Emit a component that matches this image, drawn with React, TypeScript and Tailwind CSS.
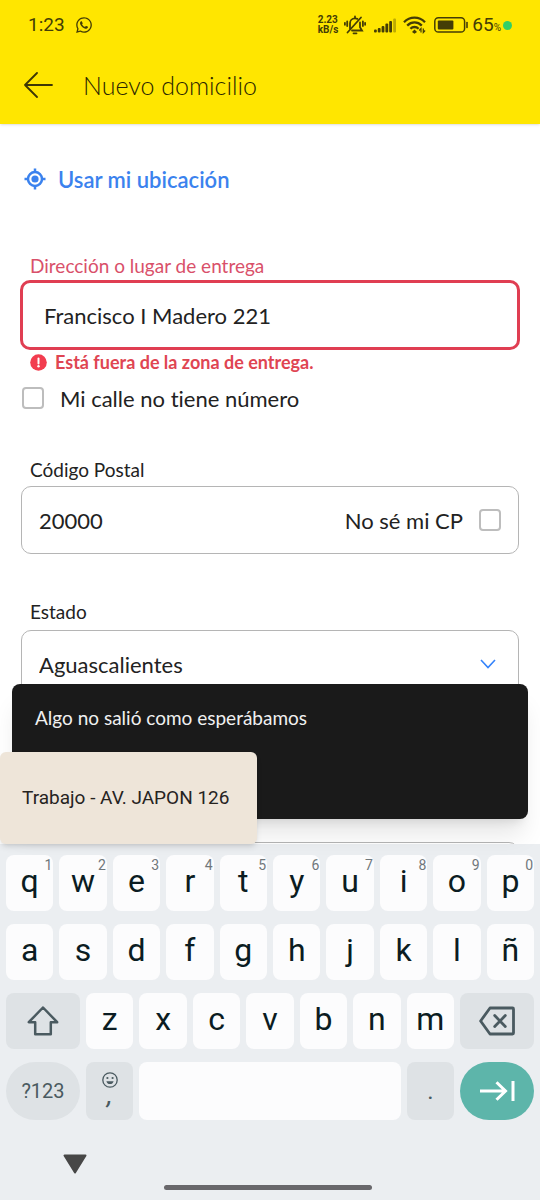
import React from 'react';
import { FaWhatsapp } from 'react-icons/fa';

const topRow = ['q', 'w', 'e', 'r', 't', 'y', 'u', 'i', 'o', 'p'];
const homeRow = ['a', 's', 'd', 'f', 'g', 'h', 'j', 'k', 'l', 'ñ'];
const bottomRow = ['z', 'x', 'c', 'v', 'b', 'n', 'm'];

const checkboxClass = 'w-[22px] h-[22px] shrink-0 appearance-none rounded border-2 border-[#bdbdbd] bg-white checked:bg-[#3483fa]';

function StatusBar() {
  return (
    <div className="h-[50px] flex items-center justify-between pl-7 pr-7 font-[Roboto,sans-serif] text-[#443d06]">
      <div className="flex items-center gap-2.5">
        <span className="text-[19px] leading-6">1:23</span>
        <FaWhatsapp className="w-[18px] h-[18px]" />
      </div>
      <div className="flex items-center">
        <div className="text-[10px] font-bold leading-[10px] mr-1.5">
          <div>2.23</div>
          <div>kB/s</div>
        </div>
        <svg className="w-[22px] h-5 mr-2" viewBox="0 0 22 20" fill="none" stroke="currentColor" strokeWidth="1.8" strokeLinecap="round">
          <path d="M6 13.5V8.500C6 5.500 8 3.400 11 3.400c.9 0 1.700.2 2.400.5M16 7.500v4.800l2 3.200H8" />
          <path d="M11 1.500v1.500M9.500 18.300h3M3.500 17.500 17 2.500" />
          <path d="M3.200 6.500v4.500M.9 7.800v2M18.900 6.500v4.500M21.100 7.800v2" />
        </svg>
        <svg className="w-[22px] h-4 mr-[7px]" viewBox="0 0 22 16" fill="currentColor">
          <rect x="0" y="12.5" width="2.8" height="3" rx="1" />
          <rect x="3.8" y="11" width="2.8" height="4.5" rx="1" />
          <rect x="7.6" y="9" width="2.8" height="6.5" rx="1" />
          <rect x="11.4" y="6.5" width="2.8" height="9" rx="1" />
          <rect x="15.2" y="4" width="2.8" height="11.5" rx="1" />
          <rect x="19.2" y="1.5" width="2.8" height="14" rx="1" opacity=".35" />
        </svg>
        <svg className="w-[23px] h-[18px] mr-2" viewBox="0 0 23 18" fill="none" stroke="currentColor" strokeWidth="2.3">
          <path d="M1 6.2C7 .2 16 .2 22 6.2" />
          <path d="M4.2 9.6c4.2-4.2 10.4-4.2 14.6 0" />
          <path d="M7.4 12.8c2.4-2.4 5.8-2.4 8.2 0" />
          <path d="M11.5 13.6 14 16l-2.5 1.8L9 16z" fill="currentColor" stroke="none" />
          <path d="M18 16.5v-4l-1.8 2M20.3 12.5v4l1.8-2" strokeWidth="1.2" />
        </svg>
        <svg className="w-[34px] h-4 mr-1" viewBox="0 0 34 16" fill="none" stroke="currentColor" strokeWidth="1.5">
          <rect x=".8" y=".8" width="29.8" height="14.2" rx="3.6" />
          <rect x="3.8" y="3.4" width="15.6" height="9" rx="1" fill="currentColor" stroke="none" />
          <path d="M33 5.5v5" strokeWidth="1.6" strokeLinecap="round" />
        </svg>
        <span className="text-[19px] leading-6">65</span>
        <span className="text-[10px] leading-3 pt-1.5">%</span>
        <span className="w-[9px] h-[9px] ml-0.5 rounded-full bg-[#33cf66]" />
      </div>
    </div>
  );
}

function Header() {
  return (
    <header className="shrink-0 bg-[#ffe600] shadow-sm pb-1">
      <StatusBar />
      <div className="h-[70px] flex items-center pl-6 gap-[30px]">
        <button type="button" aria-label="Volver" className="text-[#3d3705]">
          <svg className="w-[29px] h-[26px]" viewBox="0 0 29 26" fill="none" stroke="currentColor" strokeWidth="1.8" strokeLinecap="round" strokeLinejoin="round">
            <path d="M28 13H1M13 1 1 13l12 12" />
          </svg>
        </button>
        <h1 className="text-[25px] font-light leading-8 text-[#2b2600]">Nuevo domicilio</h1>
      </div>
    </header>
  );
}

function AddressForm() {
  return (
    <form className="px-5 pt-[43px] text-[#222222]">
      <button type="button" className="flex items-center gap-3 h-6 pl-1 text-[22px] font-semibold text-[#3b82ee]">
        <svg className="w-[22px] h-[22px]" viewBox="0 0 22 22" fill="none" stroke="currentColor" strokeWidth="2.5">
          <circle cx="11" cy="11" r="7" />
          <circle cx="11" cy="11" r="3.6" fill="currentColor" stroke="none" />
          <path d="M11 .5v4M11 17.5v4M.5 11h4M17.5 11h4" />
        </svg>
        Usar mi ubicación
      </button>

      <label htmlFor="direccion" className="block mt-[63px] mb-0.5 pl-2.5 text-[19px] leading-6 text-[#d9506a]">Dirección o lugar de entrega</label>
      <input
        id="direccion"
        type="text"
        defaultValue="Francisco I Madero 221"
        className="block w-full h-[70px] px-[21px] rounded-[10px] border-3 border-[#e03e52] bg-white text-[22px] outline-none"
      />
      <p className="flex items-center gap-2 h-6 pl-2.5 text-lg font-bold text-[#df4552]">
        <svg className="w-[17px] h-[17px]" viewBox="0 0 17 17">
          <circle cx="8.5" cy="8.5" r="8.3" fill="#f23d4f" />
          <path d="M8.5 4.4v5" stroke="#fff" strokeWidth="2" strokeLinecap="round" />
          <circle cx="8.5" cy="12.3" r="1.2" fill="#fff" />
        </svg>
        Está fuera de la zona de entrega.
      </p>
      <label className="flex items-center gap-4 h-6 mt-3 pl-0.5 text-[22px]">
        <input type="checkbox" className={checkboxClass} />
        Mi calle no tiene número
      </label>

      <label htmlFor="cp" className="block mt-12 mb-1 pl-2.5 text-[19px] leading-6">Código Postal</label>
      <div className="flex items-center h-[68px] mx-px px-[17px] rounded-[10px] border border-[#b5b5b5]">
        <input id="cp" type="text" defaultValue="20000" className="flex-1 min-w-0 text-[22px] outline-none" />
        <label className="flex items-center gap-4 text-[22px]">
          No sé mi CP
          <input type="checkbox" className={checkboxClass} />
        </label>
      </div>

      <label htmlFor="estado" className="block mt-[46px] mb-1.5 pl-2.5 text-[19px] leading-6">Estado</label>
      <div className="relative mx-px">
        <select id="estado" className="block w-full h-[68px] px-[17px] rounded-[10px] border border-[#b5b5b5] bg-white appearance-none text-[22px] outline-none">
          <option>Aguascalientes</option>
        </select>
        <svg className="absolute right-[23px] top-[29px] w-4 h-[10px] pointer-events-none" viewBox="0 0 16 10" fill="none" stroke="#3483fa" strokeWidth="1.6">
          <path d="m1 1 7 7.5L15 1" />
        </svg>
      </div>

      <div className="mt-36 mx-px">
        <input type="text" aria-label="Municipio" className="block w-full h-[68px] rounded-[10px] border border-[#b5b5b5]" />
      </div>
    </form>
  );
}

function Key({ label, hint }: { label: string; hint?: string }) {
  return (
    <button type="button" className="relative flex-1 h-14 pb-1 rounded-lg bg-[#fcfcfd] text-[32px] leading-[48px] text-[#0b1c22] text-center">
      {label}
      {hint && <span className="absolute top-0.5 right-px text-sm leading-4 text-[#70777b]">{hint}</span>}
    </button>
  );
}

function Keyboard() {
  return (
    <div className="shrink-0 bg-[#ebeef1] pt-[11px] font-[Roboto,sans-serif]">
      <div className="flex flex-col gap-[13px] px-1.5">
        <div className="flex gap-1.5">
          {topRow.map((k, i) => (
            <Key key={k} label={k} hint={String((i + 1) % 10)} />
          ))}
        </div>
        <div className="flex gap-1.5">
          {homeRow.map((k) => (
            <Key key={k} label={k} />
          ))}
        </div>
        <div className="flex gap-1.5">
          <button type="button" aria-label="Mayúsculas" className="w-[74px] h-14 flex items-center justify-center rounded-lg bg-[#dee2e5] text-[#4a5a60]">
            <svg className="w-8 h-[30px]" viewBox="0 0 32 30" fill="none" stroke="currentColor" strokeWidth="2.5" strokeLinejoin="round">
              <path d="M16 1.500 1.800 16.200h6.400v12h15.600v-12h6.400z" />
            </svg>
          </button>
          {bottomRow.map((k) => (
            <Key key={k} label={k} />
          ))}
          <button type="button" aria-label="Borrar" className="w-[74px] h-14 flex items-center justify-center rounded-lg bg-[#dee2e5] text-[#4a5a60]">
            <svg className="w-9 h-[30px]" viewBox="0 0 36 30" fill="none" stroke="currentColor" strokeWidth="2.8" strokeLinejoin="round" strokeLinecap="round">
              <path d="M11 2h22.500a1 1 0 0 1 1 1v24a1 1 0 0 1-1 1H11L1.600 15z" />
              <path d="m15.700 9.600 10.600 10.800M26.300 9.600 15.700 20.400" />
            </svg>
          </button>
        </div>
        <div className="flex gap-1.5">
          <button type="button" className="w-[74px] h-[58px] rounded-full bg-[#dee2e5] text-xl text-[#4a5a60]">?123</button>
          <button type="button" className="w-[47px] h-[58px] flex flex-col items-center pt-2.5 rounded-lg bg-[#dee2e5] text-[#4a5a60]">
            <svg className="w-4 h-4" viewBox="0 0 16 16" fill="none" stroke="currentColor" strokeWidth="1.3">
              <circle cx="8" cy="8" r="7.2" />
              <circle cx="5.4" cy="6" r="1.1" fill="currentColor" stroke="none" />
              <circle cx="10.6" cy="6" r="1.1" fill="currentColor" stroke="none" />
              <path d="M4.4 9.2h7.2c-.5 1.9-1.9 2.9-3.6 2.9s-3.1-1-3.6-2.9z" fill="currentColor" stroke="none" />
            </svg>
            <span className="text-2xl leading-4 font-medium italic">,</span>
          </button>
          <button type="button" aria-label="Espacio" className="flex-1 h-[58px] rounded-lg bg-[#fcfcfd]" />
          <button type="button" className="w-[47px] h-[58px] rounded-lg bg-[#dee2e5] text-2xl text-[#4a5a60]">.</button>
          <button type="button" aria-label="Siguiente" className="w-[74px] h-[58px] flex items-center justify-center rounded-full bg-[#5db5aa] text-white">
            <svg className="w-[35px] h-5" viewBox="0 0 35 20" fill="none" stroke="currentColor" strokeWidth="3">
              <path d="M0 10h25.500M16.500 1.200l9 8.800-9 8.800M33 0v20" />
            </svg>
          </button>
        </div>
      </div>
      <div className="h-20 grid grid-cols-[1fr_208px_1fr] pr-1">
        <button type="button" aria-label="Ocultar teclado" className="self-start justify-self-center mt-[34px] ml-[-14px]">
          <svg className="w-6 h-5" viewBox="0 0 24 20" fill="#474747" stroke="#474747" strokeWidth="2" strokeLinejoin="round">
            <path d="M1.5 1.5h21L12 18.5z" />
          </svg>
        </button>
        <div className="self-end mb-2.5 h-[5px] rounded-full bg-[#68676b]" />
      </div>
    </div>
  );
}

export default function App() {
  return (
    <div className="h-screen flex flex-col overflow-hidden bg-white font-[Lato,sans-serif] [font-variant-ligatures:none]">
      <Header />
      <main className="relative z-10 flex-1 min-h-0">
        <div className="h-full overflow-hidden">
          <AddressForm />
        </div>
        <div role="alert" className="absolute inset-x-3 bottom-[25px] h-[135px] px-[23px] pt-[22px] rounded-lg bg-[#1a1a1a] shadow-xl text-[19px] leading-6 text-[#f0f0f0]">
          Algo no salió como esperábamos
        </div>
        <button type="button" className="absolute left-0 bottom-0 h-[92px] pl-[22px] pr-7 rounded-md bg-[#eee5d9] shadow-md font-[Roboto,sans-serif] text-[19px] text-[#26231f]">
          Trabajo - AV. JAPON 126
        </button>
      </main>
      <Keyboard />
    </div>
  );
}
